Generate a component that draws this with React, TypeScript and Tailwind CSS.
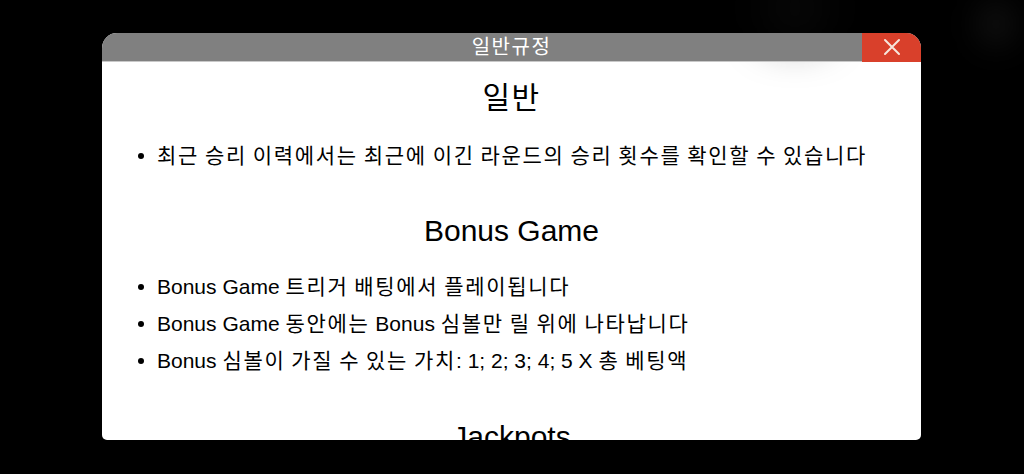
import React from "react";

const font = { fontFamily: '"Liberation Sans", Arial, "Noto Sans CJK KR", sans-serif' };

function Ko({ text, cls }: { text: string; cls: string }) {
  const parts = text.split(/([\uAC00-\uD7A3]+)/);
  return (
    <>
      {parts.map((p, i) =>
        /[\uAC00-\uD7A3]/.test(p) ? (
          <span key={i} className={cls}>
            {p}
          </span>
        ) : (
          <span key={i}>{p}</span>
        )
      )}
    </>
  );
}

function Item({ text }: { text: string }) {
  return (
    <li className="flex items-center h-[37px]">
      <span className="w-[6px] h-[6px] rounded-full bg-black shrink-0 mr-[13px]" />
      <span className="text-[21px] text-black whitespace-nowrap">
        <Ko text={text} cls="tracking-[1.7px]" />
      </span>
    </li>
  );
}

export default function App() {
  return (
    <div className="w-[1024px] h-[474px] bg-black relative overflow-hidden" style={font}>
      <div className="absolute left-[770px] top-[-20px] w-[50px] h-[55px] rounded-full bg-[#0c0c0c] blur-xl" />
      <div className="absolute left-[978px] top-[2px] w-[36px] h-[44px] rounded-full bg-[#111] blur-lg" />
      <div className="pt-[33px] pl-[102px]">
        <div className="w-[819px] h-[407px] flex flex-col rounded-t-[15px] rounded-b-[5px] overflow-hidden bg-white">
          <div className="h-[29px] shrink-0 bg-[#808080] flex items-center relative border-b border-[#c8c8c8]">
            <div className="flex-1 text-center text-white text-[20px] leading-[29px] pl-[59px] tracking-[1.5px]">일반규정</div>
            <button className="w-[59px] h-[29px] bg-[#d9402b] flex items-center justify-center">
              <svg width="18" height="18" viewBox="0 0 18 18">
                <path d="M2 2 L16 16 M16 2 L2 16" stroke="#f7e6dc" strokeWidth="2" strokeLinecap="round" />
              </svg>
            </button>
          </div>
          <div className="flex-1 overflow-hidden pl-[36px]">
            <h2 className="text-center text-[30px] leading-[36px] text-black mt-[18px] -ml-[36px] tracking-[1.5px]">일반</h2>
            <ul className="mt-[21px]">
              <Item text="최근 승리 이력에서는 최근에 이긴 라운드의 승리 횟수를 확인할 수 있습니다" />
            </ul>
            <h2 className="text-center text-[30px] leading-[36px] text-black mt-[39px] -ml-[36px]">Bonus Game</h2>
            <ul className="mt-[19px]">
              <Item text="Bonus Game 트리거 배팅에서 플레이됩니다" />
              <Item text="Bonus Game 동안에는 Bonus 심볼만 릴 위에 나타납니다" />
              <Item text="Bonus 심볼이 가질 수 있는 가치: 1; 2; 3; 4; 5 X 총 베팅액" />
            </ul>
            <h2 className="text-center text-[30px] leading-[36px] text-black mt-[40px] -ml-[36px]">Jackpots</h2>
          </div>
        </div>
      </div>
    </div>
  );
}
